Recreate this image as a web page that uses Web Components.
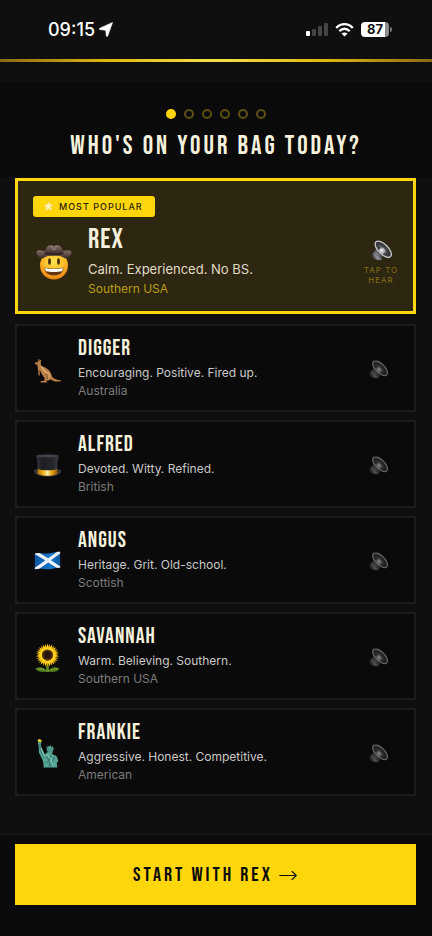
<!DOCTYPE html>
<html lang="en">
<head>
<meta charset="utf-8">
<meta name="viewport" content="width=device-width, initial-scale=1">
<title>Choose your caddie</title>
<style>
  :root {
    --gold: #ffd60a;
    --ink: #0a0a0a;
    --surface: #0f0f0f;
    --line: #1c1c1c;
    --cream: #f5f1dc;
    --display: "Bebas Neue", "Oswald", "Roboto Condensed", "Open Sans Condensed", "Liberation Sans Narrow", "Liberation Sans", sans-serif;
  }

  body {
    margin: 0;
    background: var(--surface);
    color: var(--cream);
    font-family: Inter, "Liberation Sans", sans-serif;
  }
</style>
</head>
<body>
<caddie-picker></caddie-picker>

<script>
// ─── Icons ────────────────────────────────────────────────────────────────────
const ICONS = {
  cowboy: `
    <defs>
      <radialGradient id="face" cx=".5" cy=".35" r=".65"><stop offset="0" stop-color="#ffe34d"/><stop offset=".6" stop-color="#fdbb25"/><stop offset="1" stop-color="#e98012"/></radialGradient>
      <linearGradient id="felt" x2="0" y2="1"><stop offset="0" stop-color="#83706a"/><stop offset="1" stop-color="#392a27"/></linearGradient>
    </defs>
    <circle cx="18" cy="21.500" r="14" fill="url(#face)"/>
    <path d="M.5 8c.5-2.500 4-2 8-1h19c4-1 7.500-1.500 8 1 .3 3-2.500 6-6 6.500-6-4.500-17-4.500-23 0C3 14 .2 11 .5 8z" fill="url(#felt)"/>
    <path d="M9 9C9 4 12 1 15 1c1 0 2 1 3 1s2-1 3-1c3 0 6 3 6 8-5 2-13 2-18 0z" fill="url(#felt)"/>
    <path d="M8.600 8c5 2 14 2 18.800 0v2c-5 2-14 2-18.800 0z" fill="#302321"/>
    <path d="M16 2c0 2 1 4 2 4s2-2 2-4" fill="none" stroke="#ab9a94" stroke-width=".8"/>
    <ellipse cx="13.500" cy="17.500" rx="1.400" ry="3.200" fill="#4a2a0c"/>
    <ellipse cx="22.500" cy="17.500" rx="1.400" ry="3.200" fill="#4a2a0c"/>
    <path d="M8.500 23.500c5 1.500 14 1.500 19 0 0 5-4 8-9.500 8s-9.500-3-9.500-8z" fill="#6b3410"/>
    <path d="M9 24c5 1.400 13 1.400 18 0-.2 1.500-.6 2.500-1.300 3.300-4 1-11.400 1-15.400 0-.7-.8-1.100-1.800-1.300-3.300z" fill="#fff"/>`,
  kangaroo: `
    <g transform="translate(0 5)">
      <path d="M7 3c-.5-1.500-.8-2.600 0-3 .8 0 1.200 1.400 1.400 2.600C9 1.500 9.500.8 10 1c.5.500 0 2-.6 3 .6 1.500.2 3 1 4.500 3 1.500 7.500 2.500 10.300 6.500 1.800 2.500 2.300 6 3.800 8 1.800 2 5 3 10.500 3.500v1c-6 1-10 .5-13-2.500-1.500 1.500-3.500 1.800-4.500 1.500l-1.500 1.200c1.400.4 2 .8 2 1.300H9.500c-.8-1 .2-1.700 1.500-1.700h2.500c.8-1.500 1-2.500.7-4-2-2.500-4.200-5-4.700-8.300l-.5.300c-.5 2-.8 3.700-.5 5.200-1 0-1.800-.6-1.900-2l-.1-4C6 12 5.500 9 5.600 7 4 7.200 2 6.800 2 6c.5-1.600 2.500-2.700 5-3z" fill="#b98147"/>
      <path d="M10.500 9.500c2 3 3 6 7 7.500 2 .8 3.500 3 2.500 6" fill="none" stroke="#e1b071" stroke-width="1.600" stroke-linecap="round"/>
      <path d="M16 18c1 3 2.500 4 1.500 7M8.500 13l-1 6" fill="none" stroke="#70451f" stroke-width=".9"/>
      <circle cx="5.800" cy="4.800" r=".6" fill="#24150b"/>
    </g>`,
  hat: `
    <defs>
      <linearGradient id="silk"><stop offset="0" stop-color="#3b3c43"/><stop offset=".25" stop-color="#1c1d22"/><stop offset=".7" stop-color="#24252a"/><stop offset="1" stop-color="#36373d"/></linearGradient>
      <linearGradient id="band"><stop offset="0" stop-color="#a96a08"/><stop offset=".3" stop-color="#f3b51b"/><stop offset=".5" stop-color="#fff0a0"/><stop offset=".7" stop-color="#e9a511"/><stop offset="1" stop-color="#8e5606"/></linearGradient>
    </defs>
    <g transform="translate(0 3)">
      <path d="M1 21c-.5 5 7 8 17 8s17.500-3 17-8c-1-1.500-3-1.500-4 0v3H5v-3c-1-1.500-3.500-1.500-4 0z" fill="#36373d"/>
      <path d="M4 3c4-2.500 24-2.500 28 0-1.500 6-2 12-1.500 21-5 3.500-20 3.500-25 0C6 15 5.500 9 4 3z" fill="url(#silk)"/>
      <path d="M5.600 19c6 2.500 18.800 2.500 24.800 0l.3 6c-6 3.800-19.400 3.800-25.400 0z" fill="url(#band)"/>
      <ellipse cx="18" cy="3.200" rx="13.500" ry="1.800" fill="#404148"/>
    </g>`,
  scotland: `
    <defs>
      <clipPath id="cloth"><path d="M2 8c6-2 12 1 17 0 6-.5 9-3 15-2v20c-6-1-10 2-16 2-5 0-10-2-16 0z"/></clipPath>
      <linearGradient id="blue"><stop offset="0" stop-color="#0b509f"/><stop offset=".4" stop-color="#1269bb"/><stop offset=".6" stop-color="#1977cb"/><stop offset="1" stop-color="#095096"/></linearGradient>
    </defs>
    <g clip-path="url(#cloth)">
      <path d="M0 2h36v27H0z" fill="url(#blue)"/>
      <path d="M1 6c9 4 21 13 34 21M1 29C11 23 23 13 35 5" fill="none" stroke="#eef2f6" stroke-width="4"/>
    </g>`,
  sunflower: `
    <path d="M16.500 27h3l.4 9h-3.800z" fill="#5c8a21"/>
    <path d="M17 35c-3-6-10-6-14-3 3 4 10 5 14 3zM19 35c3-6 10-6 14-3-3 4-10 5-14 3z" fill="#547f1e"/>
    <path d="M5 32c4 0 8 0 12 3M31 32c-4 0-8 0-12 3" fill="none" stroke="#8aae42" stroke-width=".8"/>
    <g fill="#f6ab09">${petals(12)}</g>
    <g fill="#ffd51f">${petals(0)}</g>
    <circle cx="18" cy="15" r="7" fill="#5a310f"/>
    <circle cx="18" cy="15" r="5" fill="#2b1709"/>
    <circle cx="18" cy="15" r="6" fill="none" stroke="#774711" stroke-dasharray="1 1"/>`,
  liberty: `
    <path d="M6 1c1.500-1.300 3-1 4 .2 1 .3 1 2 0 2.800H7C6 3 5.500 2 6 1z" fill="#e9c83a"/>
    <path d="M6 4h4.500l-.8 2.300.5 3.200 4.200 9.500 4-3c-1.500-2-1.500-3-1-4.500l-2-2 3 1-.4-3 2.200 2.500 1.600-3 .8 3.200 3-1.700-1.300 2.800 2.500.4-2.300 1.500c.5 2 .2 3.500-1 5 1.500 1.500 4.500 1.500 6 3.500l2 5.500-2 2.300.5 6H13c.5-4-.2-6-1-9L7.500 17 6.800 7.500z" fill="#57a597"/>
    <path d="M8.500 7l.6 7 4.500 9M19 14.500c1 2 3 2 4 .5M15.500 21c4 4 5.500 7 4.500 13M22.500 19.500c-1 5-3 7-7 11M27 22l-6 13" fill="none" stroke="#265f5b" stroke-width="1"/>
    <path d="M17 20c4 2 7 6 7 13M9.700 11l4.500 11" fill="none" stroke="#a2d9c8" stroke-width="1"/>
    <path d="M18.500 12.500h1.500m1.500 0H23" stroke="#204e4b"/>`,
  speaker: `
    <defs>
      <radialGradient id="cone" cx=".5" cy=".55" r=".6"><stop offset="0" stop-color="#a8a8ac"/><stop offset=".4" stop-color="#4b4b4f"/><stop offset="1" stop-color="#1d1d20"/></radialGradient>
      <linearGradient id="magnet"><stop offset="0" stop-color="#303034"/><stop offset=".5" stop-color="#85858b"/><stop offset="1" stop-color="#28282b"/></linearGradient>
    </defs>
    <path d="M1 15l5-3.500 8 7-1.500 4C10 24.500 2 22 .5 18z" fill="url(#magnet)"/>
    <path d="M3.500 15c1 4 4 6 8 7" fill="none" stroke="#a4a4aa" stroke-width="1"/>
    <path d="M5 3c-1 7 1 12 7 15l9-.5z" fill="#55555a"/>
    <ellipse cx="14" cy="10.500" rx="11.800" ry="5.600" transform="rotate(45 14 10.500)" fill="url(#cone)" stroke="#c9c9cf" stroke-width="1.500"/>
    <circle cx="12.500" cy="12.500" r="3.300" fill="#b9b9bf"/>
    <circle cx="12" cy="11.800" r="1.500" fill="#ececf0"/>`,
  star: `<path d="M6 0l1.600 3.900 4.200.3-3.200 2.700 1 4.100L6 8.800 2.400 11l1-4.100L.2 4.200l4.200-.3z" fill="#fff4b5" stroke="#ffba38" stroke-width=".5"/>`,
  location: `<path d="M13.500.5L8.700 14c-.3.800-1.300.7-1.400-.2L6.700 8.300 1 7.600c-.9-.1-1-1.100-.2-1.400z" fill="#fff" stroke="#fff" stroke-width=".6"/>`,
  signal: `
    <rect y="8" width="4" height="5" rx="1" fill="#fff"/>
    <g fill="#444"><rect x="6" y="6" width="4" height="7" rx="1"/><rect x="12" y="3" width="4" height="10" rx="1"/><rect x="18" width="4" height="13" rx="1"/></g>`,
  wifi: `
    <path d="M1.200 5C6-.1 13-.1 17.800 5M4.300 8.200c3.200-3 7.200-3 10.400 0" fill="none" stroke="#fff" stroke-width="2.300"/>
    <path d="M6.500 10.500c1.800-1.500 4.200-1.500 6 0l-3 3z" fill="#fff"/>`
};

function petals(turn) {
  let out = '';
  for (let a = 0; a < 360; a += 24) {
    out += `<path d="M15.500 9L18 .5 20.500 9z" transform="rotate(${a + turn} 18 15)"/>`;
  }
  return out;
}

function icon(name, box) {
  return `<svg viewBox="0 0 ${box}" aria-hidden="true">${ICONS[name]}</svg>`;
}


// ─── Status bar ───────────────────────────────────────────────────────────────
class StatusBar extends HTMLElement {
  constructor() {
    super();
    this.attachShadow({ mode: "open" });
  }

  connectedCallback() {
    this.shadowRoot.innerHTML = `
      <style>
        :host {
          display: flex;
          align-items: center;
          justify-content: space-between;
          height: 59px;
          padding: 0 40px 0 48px;
          box-sizing: border-box;
          color: #fff;
          font-size: 18px;
          font-weight: 500;
        }

        .group { display: flex; align-items: center; gap: 7px; }
        .time { gap: 4px; }
        svg { display: block; }
        .time svg { width: 14px; height: 15px; }
        .signal svg { width: 22px; height: 13px; }
        .wifi svg { width: 19px; height: 14px; }

        .battery { display: flex; align-items: center; gap: 1px; }
        .level {
          width: 28px;
          height: 15px;
          border-radius: 4px;
          background: linear-gradient(90deg, #fff 87%, #8c8c8c 87%);
          color: #111;
          font-size: 13px;
          font-weight: 700;
          line-height: 15px;
          text-align: center;
        }
        .cap { width: 2px; height: 5px; border-radius: 0 2px 2px 0; background: #777; }
      </style>

      <div class="group time"><time>09:15</time>${icon('location', '14 15')}</div>
      <div class="group">
        <span class="signal">${icon('signal', '22 13')}</span>
        <span class="wifi">${icon('wifi', '19 14')}</span>
        <span class="battery"><span class="level">87</span><span class="cap"></span></span>
      </div>
    `;
  }
}

customElements.define("status-bar", StatusBar);


// ─── Progress dots ────────────────────────────────────────────────────────────
class StepDots extends HTMLElement {
  constructor() {
    super();
    this.attachShadow({ mode: "open" });
  }

  connectedCallback() {
    const total = Number(this.getAttribute('total'));
    const current = Number(this.getAttribute('current'));
    let dots = '';
    for (let i = 1; i <= total; i++) {
      dots += `<i class="${i === current ? 'on' : ''}"></i>`;
    }

    this.shadowRoot.innerHTML = `
      <style>
        :host { display: flex; justify-content: center; gap: 8px; }
        i {
          width: 10px;
          height: 10px;
          box-sizing: border-box;
          border: 2px solid #5c4f10;
          border-radius: 50%;
        }
        .on { border-color: var(--gold); background: var(--gold); }
      </style>
      ${dots}
    `;
  }
}

customElements.define("step-dots", StepDots);


// ─── Caddie card ──────────────────────────────────────────────────────────────
class CaddieCard extends HTMLElement {
  constructor() {
    super();
    this.attachShadow({ mode: "open" });
  }

  connectedCallback() {
    const featured = this.hasAttribute('featured');

    this.shadowRoot.innerHTML = `
      <style>
        :host {
          display: block;
          box-sizing: border-box;
          padding: 9px 16px 7px;
          border: 2px solid var(--line);
          background: var(--ink);
        }
        :host([featured]) {
          margin-bottom: 2px;
          padding: 15px 15px 12px;
          border: 3px solid var(--gold);
          background: #2d2610;
        }

        button {
          margin: 0;
          padding: 0;
          border: 0;
          background: none;
          color: inherit;
          font: inherit;
          cursor: pointer;
        }

        .badge {
          display: flex;
          align-items: center;
          gap: 5px;
          width: max-content;
          height: 21px;
          margin-bottom: 8px;
          padding: 0 12px 0 10px;
          border-radius: 3px;
          background: var(--gold);
          color: #292200;
          font-size: 9px;
          font-weight: 500;
          letter-spacing: 1px;
        }
        .badge svg { width: 11px; height: 11px; }

        .row { display: flex; align-items: center; }
        .pick { flex: 1; display: flex; align-items: center; gap: 16px; text-align: left; }
        .avatar { width: 29px; }
        .avatar svg { display: block; width: 100%; }
        :host([featured]) .avatar { width: 36px; padding-left: 3px; }

        .about { display: grid; padding-bottom: 3px; font-size: 12px; line-height: 18px; }
        .name { margin-bottom: 1px; font: 400 22px/28px var(--display); letter-spacing: 1px; }
        .traits { color: #c9c9c6; }
        .origin { color: #7c7c7c; font-size: 12px; }
        :host([featured]) .about { padding-bottom: 0; font-size: 13px; line-height: 20px; }
        :host([featured]) .name { margin-bottom: 4px; font-size: 28px; line-height: 30px; }
        :host([featured]) .traits { color: #e0dcc6; }
        :host([featured]) .origin { color: #bb9d12; }

        .hear {
          display: grid;
          justify-items: center;
          gap: 4px;
          width: 40px;
          color: #87720f;
          font-size: 8px;
          line-height: 10px;
          letter-spacing: 1px;
          white-space: nowrap;
        }
        .hear svg { width: 19px; opacity: .5; }
        :host([featured]) .hear { width: 34px; justify-content: center; }
        :host([featured]) .hear svg { width: 21px; opacity: 1; }
      </style>

      ${featured ? `<div class="badge">${icon('star', '12 12')}MOST POPULAR</div>` : ''}
      <div class="row">
        <button class="pick" type="button" aria-pressed="${featured}">
          <span class="avatar">${icon(this.getAttribute('avatar'), '36 36')}</span>
          <span class="about">
            <span class="name"><slot name="name"></slot></span>
            <span class="traits"><slot></slot></span>
            <span class="origin"><slot name="origin"></slot></span>
          </span>
        </button>
        <button class="hear" type="button">
          ${icon('speaker', '24 24')}
          ${featured ? '<span>TAP TO<br>HEAR</span>' : ''}
        </button>
      </div>
    `;
  }
}

customElements.define("caddie-card", CaddieCard);


// ─── Page ─────────────────────────────────────────────────────────────────────
const CADDIES = [
  { name: 'REX', avatar: 'cowboy', traits: 'Calm. Experienced. No BS.', origin: 'Southern USA', featured: true },
  { name: 'DIGGER', avatar: 'kangaroo', traits: 'Encouraging. Positive. Fired up.', origin: 'Australia' },
  { name: 'ALFRED', avatar: 'hat', traits: 'Devoted. Witty. Refined.', origin: 'British' },
  { name: 'ANGUS', avatar: 'scotland', traits: 'Heritage. Grit. Old-school.', origin: 'Scottish' },
  { name: 'SAVANNAH', avatar: 'sunflower', traits: 'Warm. Believing. Southern.', origin: 'Southern USA' },
  { name: 'FRANKIE', avatar: 'liberty', traits: 'Aggressive. Honest. Competitive.', origin: 'American' }
];

class CaddiePicker extends HTMLElement {
  constructor() {
    super();
    this.attachShadow({ mode: "open" });
  }

  connectedCallback() {
    const cards = CADDIES.map(c => `
      <caddie-card avatar="${c.avatar}" ${c.featured ? 'featured' : ''}>
        <span slot="name">${c.name}</span>${c.traits}<span slot="origin">${c.origin}</span>
      </caddie-card>
    `).join('');

    this.shadowRoot.innerHTML = `
      <style>
        :host { display: flex; flex-direction: column; min-height: 100vh; }

        .rule {
          height: 3px;
          margin-bottom: 20px;
          background: linear-gradient(90deg, #8b6914, #e0b80f 25%, #f5e04a 50%, #e0b80f 75%, #8b6914);
        }

        header { padding: 27px 16px 16px; background: var(--ink); }
        h1 {
          margin: 14px 0 0;
          font: 400 26px/28px var(--display);
          letter-spacing: 3px;
          text-align: center;
        }

        main {
          flex: 1;
          display: flex;
          flex-direction: column;
          gap: 8px;
          padding: 1px 16px 16px 15px;
        }

        footer {
          padding: 9px 16px 31px 15px;
          border-top: 1px solid var(--line);
          background: var(--ink);
        }
        footer button {
          display: flex;
          align-items: center;
          justify-content: center;
          gap: 5px;
          width: 100%;
          height: 61px;
          padding: 0;
          border: 0;
          background: var(--gold);
          color: var(--ink);
          font: 400 20px/24px var(--display);
          letter-spacing: 3px;
          cursor: pointer;
        }
        .arrow { font: 200 24px/24px "DejaVu Sans", sans-serif; letter-spacing: 0; }
      </style>

      <status-bar></status-bar>
      <div class="rule"></div>
      <header>
        <step-dots total="6" current="1"></step-dots>
        <h1>WHO'S ON YOUR BAG TODAY?</h1>
      </header>
      <main>${cards}</main>
      <footer>
        <button type="button">START WITH REX<span class="arrow">→</span></button>
      </footer>
    `;
  }
}

customElements.define("caddie-picker", CaddiePicker);
</script>
</body>
</html>
